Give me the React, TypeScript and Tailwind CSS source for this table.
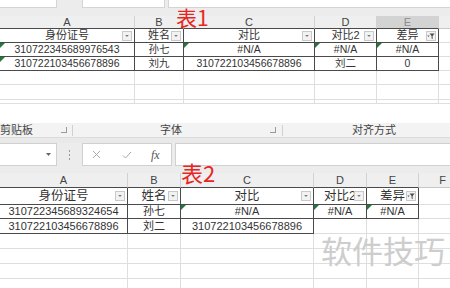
type Cell = { v?: string; f?: "dd" | "on"; g?: boolean; t?: boolean };
type Row = { h: number; cells: Cell[] };

function Drop({ on }: { on?: boolean }) {
  return (
    <span className="absolute right-[2px] top-1/2 flex h-[10px] w-[10px] -translate-y-1/2 items-center justify-center border border-[#c9c9c9] bg-[#f2f2f2]">
      {on ? (
        <svg width="8" height="8" viewBox="0 0 8 8">
          <path d="M2.6 1.4h5L5.6 4v3.2L4.6 6.6V4z" fill="#4a4a4a" />
          <path d="M0.4 3.4h2.2L1.5 5z" fill="#4a4a4a" />
        </svg>
      ) : (
        <svg width="6" height="4" viewBox="0 0 6 4">
          <path d="M1.2 1h3.6L3 3z" fill="#7a7a7a" />
        </svg>
      )}
    </span>
  );
}

function Sheet({
  widths,
  letters,
  sel,
  colH,
  rows,
  text,
  head,
}: {
  widths: number[];
  letters: string[];
  sel?: number;
  colH: number;
  rows: Row[];
  text: string;
  head: string;
}) {
  const inT = (r: number, c: number) => !!rows[r]?.cells[c]?.t;
  return (
    <div className="flex flex-col">
      <div className="flex bg-[#efefef] text-[11px] text-[#444]" style={{ height: colH }}>
        {letters.map((l, c) => (
          <div
            key={c}
            style={{ width: widths[c] }}
            className={`flex shrink-0 items-center justify-center border-r border-b border-r-[#d2d2d2] ${
              inT(0, c) ? "border-b-[#4a4a4a]" : "border-b-[#c8c8c8]"
            } ${c === sel ? "bg-[#d3d3d3] text-[#8c8c8c]" : ""}`}
          >
            {l}
          </div>
        ))}
      </div>
      {rows.map((row, r) => (
        <div key={r} className={`flex ${r === 0 ? head : text} text-[#333]`} style={{ height: row.h }}>
          {letters.map((_, c) => {
            const cell = row.cells[c] ?? {};
            const right = inT(r, c) || inT(r, c + 1);
            const bottom = inT(r, c) || inT(r + 1, c);
            return (
              <div
                key={c}
                style={{ width: widths[c] }}
                className={`relative flex shrink-0 items-center justify-center border-r border-b ${
                  right ? "border-r-[#4a4a4a]" : "border-r-[#dedede]"
                } ${bottom ? "border-b-[#4a4a4a]" : "border-b-[#dedede]"}`}
              >
                {cell.g && (
                  <span className="absolute left-0 top-0 h-0 w-0 border-t-[5px] border-r-[5px] border-t-[#1f7a3a] border-r-transparent" />
                )}
                <span className="whitespace-nowrap leading-none">{cell.v}</span>
                {cell.f && <Drop on={cell.f === "on"} />}
              </div>
            );
          })}
        </div>
      ))}
    </div>
  );
}

const empty: Cell[] = [];

const top: Row[] = [
  {
    h: 14,
    cells: [
      { v: "身份证号", f: "dd", t: true },
      { v: "姓名", f: "dd", t: true },
      { v: "对比", f: "dd", t: true },
      { v: "对比2", f: "dd", t: true },
      { v: "差异", f: "on", t: true },
    ],
  },
  {
    h: 14,
    cells: [
      { v: "310722345689976543", t: true, g: true },
      { v: "孙七", t: true },
      { v: "#N/A", t: true, g: true },
      { v: "#N/A", t: true, g: true },
      { v: "#N/A", t: true, g: true },
    ],
  },
  {
    h: 14,
    cells: [
      { v: "310722103456678896", t: true, g: true },
      { v: "刘九", t: true },
      { v: "310722103456678896", t: true },
      { v: "刘二", t: true },
      { v: "0", t: true },
    ],
  },
  { h: 14, cells: empty },
  { h: 15, cells: empty },
  { h: 4, cells: empty },
];

const bottom: Row[] = [
  {
    h: 17,
    cells: [
      { v: "身份证号", f: "dd", t: true },
      { v: "姓名", f: "dd", t: true },
      { v: "对比", f: "dd", t: true },
      { v: "对比2", f: "dd", t: true },
      { v: "差异", f: "on", t: true },
    ],
  },
  {
    h: 14,
    cells: [
      { v: "310722345689324654", t: true },
      { v: "孙七", t: true },
      { v: "#N/A", t: true, g: true },
      { v: "#N/A", t: true, g: true },
      { v: "#N/A", t: true, g: true },
    ],
  },
  {
    h: 15,
    cells: [
      { v: "310722103456678896", t: true },
      { v: "刘二", t: true },
      { v: "310722103456678896", t: true },
    ],
  },
  { h: 15, cells: empty },
  { h: 15, cells: empty },
  { h: 15, cells: empty },
  { h: 15, cells: empty },
];

export default function App() {
  return (
    <div
      className="relative h-[288px] w-[450px] overflow-hidden bg-white"
      style={{ fontFamily: '"Liberation Sans", "Noto Sans CJK SC", sans-serif' }}
    >
      {/* formula bar, bottom edge */}
      <div className="flex h-[8px] bg-[#ececec]">
        <div className="w-[57px] border-b border-r border-[#d4d4d4] bg-white" />
        <div className="w-[25px]" />
        <div className="w-[83px] border-b border-x border-[#d4d4d4] bg-white" />
        <div className="w-[3px]" />
        <div className="flex-1 border-b border-l border-[#d4d4d4] bg-white" />
      </div>
      <div className="h-[8px] bg-[#ececec]" />

      <Sheet
        widths={[135, 49, 131, 62, 62, 60]}
        letters={["A", "B", "C", "D", "E", ""]}
        sel={4}
        colH={13}
        rows={top}
        text="text-[10.5px]"
        head="text-[11px]"
      />

      <div className="h-[19px] bg-white" />

      {/* ribbon group labels */}
      <div className="flex h-[15px] items-center border-b border-[#dcdcdc] bg-[#f3f3f3] text-[11px] text-[#444]">
        <span className="w-[61px]">剪贴板</span>
        <span className="h-[6px] w-[6px] border-r border-b border-[#9a9a9a]" />
        <span className="ml-[5px] h-[11px] w-px bg-[#d0d0d0]" />
        <span className="ml-[87px] w-[110px]">字体</span>
        <span className="h-[6px] w-[6px] border-r border-b border-[#9a9a9a]" />
        <span className="ml-[6px] h-[11px] w-px bg-[#d0d0d0]" />
        <span className="ml-[69px]">对齐方式</span>
      </div>
      <div className="h-[5px] bg-[#e9e9e9]" />

      {/* formula bar */}
      <div className="flex h-[23px] bg-[#ececec]">
        <div className="relative w-[57px] border border-l-0 border-[#d0d0d0] bg-white">
          <svg className="absolute right-[5px] top-[9px]" width="5" height="3" viewBox="0 0 5 3">
            <path d="M0 0h5L2.5 3z" fill="#666" />
          </svg>
        </div>
        <div className="flex w-[25px] flex-col items-center justify-center gap-[2px]">
          <span className="h-[2px] w-[1px] bg-[#999]" />
          <span className="h-[2px] w-[1px] bg-[#999]" />
          <span className="h-[2px] w-[1px] bg-[#999]" />
        </div>
        <div className="flex w-[90px] items-center border border-[#d0d0d0] bg-white">
          <svg className="ml-[9px]" width="9" height="9" viewBox="0 0 9 9">
            <path d="M1 1l7 7M8 1L1 8" stroke="#a8a8a8" strokeWidth="1" />
          </svg>
          <svg className="ml-[21px]" width="10" height="8" viewBox="0 0 10 8">
            <path d="M1 4.5l2.5 2.5L9 1" stroke="#a8a8a8" strokeWidth="1" fill="none" />
          </svg>
          <span
            className="ml-[19px] text-[12px] italic text-[#555]"
            style={{ fontFamily: '"Liberation Serif", serif' }}
          >
            fx
          </span>
        </div>
        <div className="w-[3px]" />
        <div className="flex-1 border border-r-0 border-[#d0d0d0] bg-white" />
      </div>
      <div className="h-[7px] bg-[#ececec]" />

      <Sheet
        widths={[128, 53, 133, 53, 52, 48]}
        letters={["A", "B", "C", "D", "E", "F"]}
        colH={15}
        rows={bottom}
        text="text-[11px]"
        head="text-[12.5px]"
      />

      <span
        className="absolute left-[176px] top-[7px] text-[21px] leading-none text-[#e8261f]"
        style={{ fontFamily: '"Noto Sans CJK SC", sans-serif' }}
      >
        表1
      </span>
      <span
        className="absolute left-[181px] top-[161px] text-[22px] leading-none text-[#e8261f]"
        style={{ fontFamily: '"Noto Sans CJK SC", sans-serif' }}
      >
        表2
      </span>
      <span
        className="absolute left-[321px] top-[234px] text-[31px] leading-none text-[#cdcdcd]"
        style={{ fontFamily: '"Noto Sans CJK SC", sans-serif' }}
      >
        软件技巧
      </span>
    </div>
  );
}
